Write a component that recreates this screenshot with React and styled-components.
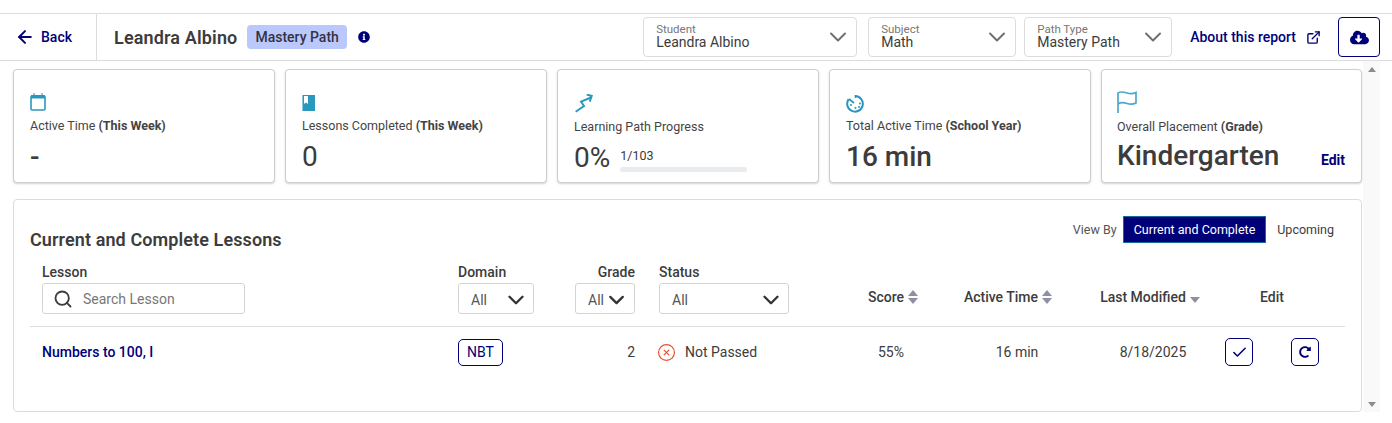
import React from 'react';
import styled, { createGlobalStyle } from 'styled-components';
import { ArrowLeft, Check, ChevronDown, CircleX, ExternalLink, Search } from 'lucide-react';
import { FaCloudDownloadAlt, FaInfoCircle, FaRedoAlt } from 'react-icons/fa';

const navy = '#000078';
const teal = '#2a97bd';

const GlobalStyle = createGlobalStyle`
  html, body {
    margin: 0;
    padding: 0;
    background: #ffffff;
    font-family: Roboto, "Liberation Sans", sans-serif;
    color: #3c3c3c;
  }
`;

const Page = styled.div`
  padding-top: 13px;
  width: 1392px;
  height: 410px;
  overflow: hidden;
`;

const Header = styled.header`
  display: flex;
  align-items: center;
  height: 46px;
  border-top: 1px solid #dcdcdc;
  border-bottom: 1px solid #dcdcdc;
  padding-right: 12px;
`;

const BackLink = styled.a`
  display: flex;
  align-items: center;
  gap: 6px;
  width: 81px;
  height: 100%;
  padding-left: 15px;
  border-right: 1px solid #dcdcdc;
  color: ${navy};
  font-size: 14px;
  font-weight: 500;
`;

const StudentName = styled.h1`
  margin: 0 10px 0 17px;
  font-size: 18px;
  font-weight: 600;
  letter-spacing: 0.15px;
`;

const Badge = styled.span`
  display: flex;
  align-items: center;
  height: 24px;
  padding: 0 8px;
  border-radius: 4px;
  background: #bac8fb;
  font-size: 14px;
  font-weight: 500;
  color: #333344;
`;

const InfoButton = styled.span`
  display: flex;
  margin-left: 11px;
  color: ${navy};
  font-size: 12px;
`;

const Controls = styled.div`
  display: flex;
  align-items: center;
  margin-left: auto;
`;

const Picker = styled.div`
  display: flex;
  align-items: center;
  justify-content: space-between;
  box-sizing: border-box;
  width: ${p => p.$width}px;
  height: 40px;
  margin-right: ${p => p.$gap}px;
  padding: 0 4px 0 12px;
  border: 1px solid #dcdcdc;
  border-radius: 4px;
  color: #707070;
`;

const PickerText = styled.div`
  display: flex;
  flex-direction: column;
  margin-top: -2px;
`;

const PickerLabel = styled.span`
  font-size: 11.5px;
  line-height: 11px;
  margin-top: 1px;
  color: #777777;
`;

const PickerValue = styled.span`
  font-size: 14px;
  line-height: 15px;
  color: #3c3c3c;
`;

const AboutLink = styled.a`
  display: flex;
  align-items: center;
  gap: 10px;
  margin: 0 17px 0 18px;
  color: ${navy};
  font-size: 14px;
  font-weight: 500;
`;

const DownloadButton = styled.button`
  display: flex;
  align-items: center;
  justify-content: center;
  width: 42px;
  height: 40px;
  padding: 0;
  background: #ffffff;
  border: 1px solid ${navy};
  border-radius: 4px;
  color: ${navy};
  font-size: 19px;
`;

const Body = styled.div`
  display: flex;
  padding-right: 12px;
`;

const Content = styled.main`
  box-sizing: border-box;
  width: 1363px;
  padding: 8px 1px 0 13px;
`;

const ScrollTrack = styled.div`
  display: flex;
  flex-direction: column;
  align-items: center;
  justify-content: space-between;
  box-sizing: border-box;
  width: 17px;
  height: 351px;
  padding: 6px 0 5px;
  background: #f9f9f9;
`;

const ScrollArrow = styled.span`
  width: 0;
  height: 0;
  border-left: 4px solid transparent;
  border-right: 4px solid transparent;
  ${p => (p.$down ? 'border-top: 5px solid #8c8c8c;' : 'border-bottom: 5px solid #8c8c8c;')}
`;

const CardRow = styled.section`
  display: grid;
  grid-template-columns: repeat(4, 262px) 261px;
  gap: 10px;
`;

const Card = styled.article`
  box-sizing: border-box;
  height: 114px;
  padding: ${p => p.$top}px 16px 0 ${p => p.$left || 16}px;
  background: #ffffff;
  border: 1px solid #cfcfcf;
  border-radius: 4px;
  box-shadow: 0 1px 2px rgba(0, 0, 0, 0.18);
`;

const CardIcon = styled.div`
  display: flex;
  height: ${p => p.$height}px;
  align-items: flex-end;
`;

const CardLabel = styled.div`
  margin-top: ${p => p.$top}px;
  font-size: 12.5px;
  line-height: 16px;
  color: #444444;

  b {
    font-weight: 700;
  }
`;

const CardValue = styled.div`
  display: flex;
  align-items: center;
  justify-content: space-between;
  height: 32px;
  margin-top: ${p => p.$top}px;
  font-size: 28px;
  font-weight: ${p => p.$weight || 500};
`;

const ProgressBox = styled.div`
  display: flex;
  flex-direction: column;
  flex: 1;
  margin: 7px 0 0 10px;
  gap: 4px;
`;

const ProgressCount = styled.span`
  font-size: 12.5px;
  line-height: 14px;
  font-weight: 400;
`;

const ProgressBar = styled.div`
  width: 127px;
  height: 5px;
  border-radius: 3px;
  background: #e9ecef;
`;

const EditLink = styled.a`
  align-self: flex-end;
  margin-bottom: 3px;
  color: ${navy};
  font-size: 14px;
  font-weight: 700;
`;

const Panel = styled.section`
  box-sizing: border-box;
  height: 213px;
  margin-top: 16px;
  padding: 16px 16px 0;
  background: #ffffff;
  border: 1px solid #dcdcdc;
  border-radius: 4px;
`;

const PanelTop = styled.div`
  display: flex;
  justify-content: space-between;
  height: 48px;
`;

const PanelTitle = styled.h2`
  margin: 13px 0 0;
  font-size: 18px;
  line-height: 22px;
  font-weight: 600;
  letter-spacing: 0.1px;
`;

const ViewBy = styled.div`
  display: flex;
  align-items: center;
  height: 27px;
  font-size: 12.5px;
`;

const ViewLabel = styled.span`
  margin-right: 6px;
  color: #555555;
`;

const ViewTab = styled.button`
  box-sizing: border-box;
  height: 27px;
  padding: 0 10px;
  border: 1px solid ${p => (p.$active ? '#0f6c9c' : 'transparent')};
  background: ${p => (p.$active ? navy : 'transparent')};
  color: ${p => (p.$active ? '#ffffff' : '#3c3c3c')};
  font-family: inherit;
  font-size: 12.5px;
`;

const columns = '416px 117px 84px 189px 86px 150px 132px 112px';

const HeadRow = styled.div`
  display: grid;
  grid-template-columns: ${columns};
  align-items: end;
  height: 63px;
  padding: 0 0 12px 12px;
  box-sizing: border-box;
  border-bottom: 1px solid #dcdce2;
`;

const FilterCell = styled.div`
  display: flex;
  flex-direction: column;
  align-items: ${p => (p.$right ? 'flex-end' : 'flex-start')};
  gap: 3px;
  ${p => p.$right && 'width: 60px;'}
`;

const ColumnLabel = styled.label`
  font-size: 14px;
  line-height: 16px;
  font-weight: 500;
`;

const SearchBox = styled.div`
  display: flex;
  align-items: center;
  gap: 10px;
  box-sizing: border-box;
  width: 203px;
  height: 31px;
  padding-left: 10px;
  border: 1px solid #d4d4d4;
  border-radius: 3px;
  color: #3c3c3c;
`;

const SearchInput = styled.input`
  width: 140px;
  border: 0;
  outline: 0;
  padding: 0;
  font-family: inherit;
  font-size: 14px;

  &::placeholder {
    color: #777777;
  }
`;

const Dropdown = styled.div`
  display: flex;
  align-items: center;
  justify-content: space-between;
  box-sizing: border-box;
  width: ${p => p.$width}px;
  height: 31px;
  padding: 2px ${p => p.$pad}px 0 12px;
  border: 1px solid #d4d4d4;
  border-radius: 3px;
  font-size: 14px;
  color: #555555;

  svg {
    color: #333333;
  }
`;

const SortHead = styled.div`
  display: flex;
  align-items: center;
  justify-content: center;
  gap: 4px;
  height: 14px;
  margin-bottom: 10px;
  margin-left: ${p => p.$shift || 0}px;
  font-size: 14px;
  font-weight: 500;
`;

const SortCarets = styled.span`
  display: flex;
  flex-direction: column;
  gap: 2px;
  margin-top: ${p => (p.$single ? 6 : 0)}px;
`;

const Caret = styled.i`
  display: block;
  width: 0;
  height: 0;
  border-left: 5px solid transparent;
  border-right: 5px solid transparent;
  ${p => (p.$down ? 'border-top: 6px solid #8f8fa3;' : 'border-bottom: 6px solid #8f8fa3;')}
`;

const DataRow = styled.div`
  display: grid;
  grid-template-columns: ${columns};
  align-items: center;
  height: 50px;
  padding-left: 12px;
  font-size: 14px;
`;

const LessonLink = styled.a`
  color: ${navy};
  font-weight: 500;
`;

const DomainTag = styled.span`
  display: flex;
  align-items: center;
  justify-content: center;
  box-sizing: border-box;
  width: 45px;
  height: 27px;
  border: 1px solid ${navy};
  border-radius: 5px;
  color: ${navy};
`;

const GradeCell = styled.span`
  width: 60px;
  text-align: right;
`;

const StatusCell = styled.span`
  display: flex;
  align-items: center;
  gap: 9px;

  svg {
    margin-left: -2px;
    color: #e8502f;
  }
`;

const CenterCell = styled.span`
  text-align: center;
  padding-left: ${p => p.$shift || 0}px;
`;

const EditCell = styled.div`
  display: flex;
  justify-content: center;
  gap: 38px;
`;

const IconButton = styled.button`
  display: flex;
  align-items: center;
  justify-content: center;
  width: 28px;
  height: 28px;
  padding: 0;
  background: #ffffff;
  border: 1px solid ${navy};
  border-radius: 5px;
  color: ${navy};
`;

const CalendarIcon = () => (
  <svg width="16" height="18" viewBox="0 0 16 18" fill="none">
    <path d="M4 0v3M12 0v3" stroke="#8cc6dc" strokeWidth="2" />
    <rect x="1" y="3" width="14" height="14" rx="1" stroke={teal} strokeWidth="1.6" />
    <rect x="1" y="2" width="14" height="3.500" fill={teal} />
  </svg>
);

const BookIcon = () => (
  <svg width="13" height="16" viewBox="0 0 13 16">
    <rect x="0" y="0" width="13" height="16" fill={teal} />
    <path d="M2 1h4v8L4 7.5 2 9z" fill="#ffffff" />
    <rect x="0" y="0" width="1" height="16" fill="#8cc6dc" />
  </svg>
);

const PathIcon = () => (
  <svg width="20" height="20" viewBox="0 0 20 20" fill="none">
    <path d="M1.700 17.700L10 12 7 7.700 17 3.500" stroke={teal} strokeWidth="2" />
    <path d="M12.700.5L17.700 2 15.700 7.700" stroke={teal} strokeWidth="2" />
  </svg>
);

const TimerIcon = () => (
  <svg width="19" height="19" viewBox="0 0 19 19" fill="none">
    <path d="M9 2a7.800 7.800 0 1 1-6.300 3.200" stroke={teal} strokeWidth="2" />
    <path d="M3 5l5 4" stroke={teal} strokeWidth="1.800" />
    <path d="M9.500 1v3" stroke={teal} strokeWidth="1.600" />
    <circle cx="14" cy="9.500" r="1" fill={teal} />
    <circle cx="9.500" cy="14" r="1" fill={teal} />
    <circle cx="5" cy="11" r="1" fill={teal} />
    <circle cx="13" cy="13" r="1" fill={teal} />
  </svg>
);

const FlagIcon = () => (
  <svg width="20" height="22" viewBox="0 0 20 22" fill="none">
    <path d="M1 22V2c3-2 6-1 9 0s6 1 9-.5V12c-3 1.500-6 1.500-9 .5s-6-1.500-9 .5" stroke="#4aa8cc" strokeWidth="1.700" />
  </svg>
);

const SortLabel = ({ children, single, shift }) => (
  <SortHead $shift={shift}>
    {children}
    <SortCarets $single={single}>
      {!single && <Caret />}
      <Caret $down />
    </SortCarets>
  </SortHead>
);

const App = () => (
  <Page>
    <GlobalStyle />
    <Header>
      <BackLink>
        <ArrowLeft size={20} strokeWidth={2.4} />
        Back
      </BackLink>
      <StudentName>Leandra Albino</StudentName>
      <Badge>Mastery Path</Badge>
      <InfoButton>
        <FaInfoCircle />
      </InfoButton>
      <Controls>
        <Picker $width={214} $gap={11}>
          <PickerText>
            <PickerLabel>Student</PickerLabel>
            <PickerValue>Leandra Albino</PickerValue>
          </PickerText>
          <ChevronDown size={28} strokeWidth={1.7} />
        </Picker>
        <Picker $width={148} $gap={8}>
          <PickerText>
            <PickerLabel>Subject</PickerLabel>
            <PickerValue>Math</PickerValue>
          </PickerText>
          <ChevronDown size={28} strokeWidth={1.7} />
        </Picker>
        <Picker $width={148} $gap={0}>
          <PickerText>
            <PickerLabel>Path Type</PickerLabel>
            <PickerValue>Mastery Path</PickerValue>
          </PickerText>
          <ChevronDown size={28} strokeWidth={1.7} />
        </Picker>
        <AboutLink>
          About this report
          <ExternalLink size={15} strokeWidth={2.2} />
        </AboutLink>
        <DownloadButton>
          <FaCloudDownloadAlt />
        </DownloadButton>
      </Controls>
    </Header>
    <Body>
      <Content>
        <CardRow>
          <Card $top={23}>
            <CardIcon $height={18}>
              <CalendarIcon />
            </CardIcon>
            <CardLabel $top={7}>
              Active Time <b>(This Week)</b>
            </CardLabel>
            <CardValue $top={6}>-</CardValue>
          </Card>
          <Card $top={23}>
            <CardIcon $height={18}>
              <BookIcon />
            </CardIcon>
            <CardLabel $top={7}>
              Lessons Completed <b>(This Week)</b>
            </CardLabel>
            <CardValue $top={6} $weight={450}>0</CardValue>
          </Card>
          <Card $top={25}>
            <CardIcon $height={19}>
              <PathIcon />
            </CardIcon>
            <CardLabel $top={5}>Learning Path Progress</CardLabel>
            <CardValue $top={6} $weight={450}>
              0%
              <ProgressBox>
                <ProgressCount>1/103</ProgressCount>
                <ProgressBar />
              </ProgressBox>
            </CardValue>
          </Card>
          <Card $top={25}>
            <CardIcon $height={18}>
              <TimerIcon />
            </CardIcon>
            <CardLabel $top={5}>
              Total Active Time <b>(School Year)</b>
            </CardLabel>
            <CardValue $top={6}>16 min</CardValue>
          </Card>
          <Card $top={21} $left={15}>
            <CardIcon $height={22}>
              <FlagIcon />
            </CardIcon>
            <CardLabel $top={6}>
              Overall Placement <b>(Grade)</b>
            </CardLabel>
            <CardValue $top={4}>
              Kindergarten
              <EditLink>Edit</EditLink>
            </CardValue>
          </Card>
        </CardRow>
        <Panel>
          <PanelTop>
            <PanelTitle>Current and Complete Lessons</PanelTitle>
            <ViewBy>
              <ViewLabel>View By</ViewLabel>
              <ViewTab $active>Current and Complete</ViewTab>
              <ViewTab>Upcoming</ViewTab>
            </ViewBy>
          </PanelTop>
          <HeadRow>
            <FilterCell>
              <ColumnLabel>Lesson</ColumnLabel>
              <SearchBox>
                <Search size={20} strokeWidth={2.2} />
                <SearchInput placeholder="Search Lesson" />
              </SearchBox>
            </FilterCell>
            <FilterCell>
              <ColumnLabel>Domain</ColumnLabel>
              <Dropdown $width={76} $pad={4}>
                All
                <ChevronDown size={26} strokeWidth={2.2} />
              </Dropdown>
            </FilterCell>
            <FilterCell $right>
              <ColumnLabel>Grade</ColumnLabel>
              <Dropdown $width={60} $pad={5}>
                All
                <ChevronDown size={26} strokeWidth={2.2} />
              </Dropdown>
            </FilterCell>
            <FilterCell>
              <ColumnLabel>Status</ColumnLabel>
              <Dropdown $width={130} $pad={4}>
                All
                <ChevronDown size={26} strokeWidth={2.2} />
              </Dropdown>
            </FilterCell>
            <SortLabel shift={4}>Score</SortLabel>
            <SortLabel shift={-2}>Active Time</SortLabel>
            <SortLabel single>Last Modified</SortLabel>
            <SortHead>Edit</SortHead>
          </HeadRow>
          <DataRow>
            <LessonLink>Numbers to 100, I</LessonLink>
            <span>
              <DomainTag>NBT</DomainTag>
            </span>
            <GradeCell>2</GradeCell>
            <StatusCell>
              <CircleX size={19} strokeWidth={1.5} />
              Not Passed
            </StatusCell>
            <CenterCell>55%</CenterCell>
            <CenterCell $shift={16}>16 min</CenterCell>
            <CenterCell $shift={6}>8/18/2025</CenterCell>
            <EditCell>
              <IconButton>
                <Check size={17} strokeWidth={2.2} />
              </IconButton>
              <IconButton>
                <FaRedoAlt size={12} />
              </IconButton>
            </EditCell>
          </DataRow>
        </Panel>
      </Content>
      <ScrollTrack>
        <ScrollArrow />
        <ScrollArrow $down />
      </ScrollTrack>
    </Body>
  </Page>
);

export default App;
